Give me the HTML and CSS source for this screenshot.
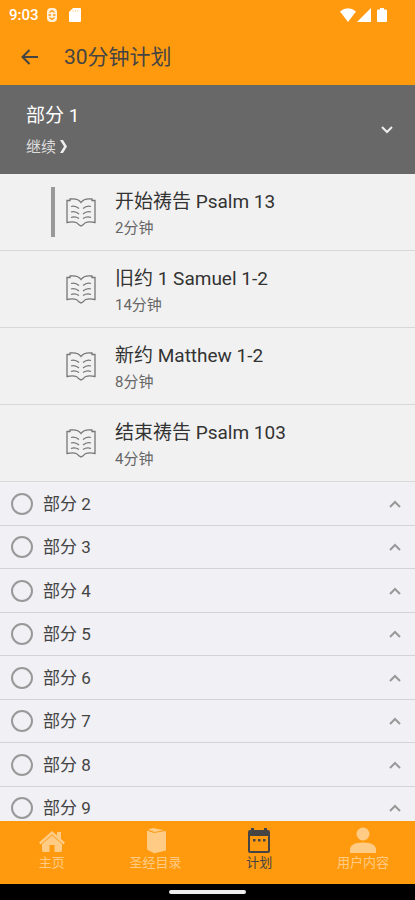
FILE: index.html
```html
<!DOCTYPE html>
<html lang="zh-CN">
<head>
    <meta charset="UTF-8">
    <meta name="viewport" content="width=device-width, initial-scale=1.0">
    <title>30分钟计划</title>
    <link rel="stylesheet" href="styles.css">
</head>
<body>
    <!-- shared icons -->
    <svg class="sprite" aria-hidden="true">
        <symbol id="book" viewBox="0 0 32 32">
            <path d="M16 6.500C14 3.500 9 2.500 5 3V4.500H2V26.500C7 25.500 12 26 13.500 28.500L16 30L18.500 28.500C20 26 25 25.500 30 26.500V4.500H27V3C23 2.500 18 3.500 16 6.500Z"/>
            <path d="M6 10.500Q10 9 14 12.500M6 16Q10 14.500 14 18M6 21.500Q10 20 14 22.500M26 10.500Q22 9 18 12.500M26 16Q22 14.500 18 18M26 21.500Q22 20 18 22.500"/>
        </symbol>
        <symbol id="up" viewBox="0 0 12 8">
            <path d="M1 7L6 2L11 7"/>
        </symbol>
    </svg>

    <div class="status">
        <span class="time">9:03</span>
        <svg width="12" height="14" viewBox="0 0 12 14">
            <rect x="1" y="0" width="10" height="14" rx="4" fill="#fff" opacity="0.85"/>
            <path d="M3.500 4.500L6 2.500L8.500 4.500M2.500 7H5M7 7H9.500M3.500 9.500L6 11.500L8.500 9.500" fill="none" stroke="#ff9a0e" stroke-width="1.300"/>
        </svg>
        <svg class="sd" width="12" height="14" viewBox="0 0 12 14">
            <path d="M4 0H11Q12 0 12 1V13Q12 14 11 14H1Q0 14 0 13V4Z" fill="#fff"/>
            <path d="M4 2V4M6.500 2V4M9 2V4" stroke="#ffd9a3"/>
        </svg>
        <span class="signals">
            <svg width="16" height="14" viewBox="0 0 16 14">
                <path d="M0 3.500Q8 -3 16 3.500L8 14Z" fill="#fff"/>
            </svg>
            <svg width="14" height="14" viewBox="0 0 14 14">
                <path d="M14 0V14H0Z" fill="#fff"/>
            </svg>
            <svg class="battery" width="10" height="14" viewBox="0 0 10 14">
                <path d="M3 0H7V1.500H9Q10 1.500 10 2.500V13Q10 14 9 14H1Q0 14 0 13V2.500Q0 1.500 1 1.500H3Z" fill="#fff"/>
            </svg>
        </span>
    </div>

    <header class="toolbar">
        <button class="back" aria-label="返回">
            <svg width="18" height="16" viewBox="0 0 18 16">
                <path d="M8.500 1L1.500 8L8.500 15M1.500 8H17"/>
            </svg>
        </button>
        <h1>30分钟计划</h1>
    </header>

    <main>
        <section class="current">
            <div>
                <h2>部分 1</h2>
                <a href="#continue" class="continue">继续
                    <svg width="7" height="13" viewBox="0 0 7 13">
                        <path d="M0 0H3L7 6.500L3 13H0L4 6.500Z" fill="#eee"/>
                    </svg>
                </a>
            </div>
            <button class="toggle" aria-label="收起">
                <svg width="12" height="8" viewBox="0 0 12 8"><path d="M1 1L6 6L11 1"/></svg>
            </button>
        </section>

        <ul class="readings">
            <li class="active">
                <svg class="book"><use href="#book"/></svg>
                <a href="#r1">开始祷告 Psalm 13<small>2分钟</small></a>
            </li>
            <li>
                <svg class="book"><use href="#book"/></svg>
                <a href="#r2">旧约 1 Samuel 1-2<small>14分钟</small></a>
            </li>
            <li>
                <svg class="book"><use href="#book"/></svg>
                <a href="#r3">新约 Matthew 1-2<small>8分钟</small></a>
            </li>
            <li>
                <svg class="book"><use href="#book"/></svg>
                <a href="#r4">结束祷告 Psalm 103<small>4分钟</small></a>
            </li>
        </ul>

        <ul class="parts">
            <li>
                <label><input type="checkbox">部分 2</label>
                <button class="toggle" aria-label="展开"><svg><use href="#up"/></svg></button>
            </li>
            <li>
                <label><input type="checkbox">部分 3</label>
                <button class="toggle" aria-label="展开"><svg><use href="#up"/></svg></button>
            </li>
            <li>
                <label><input type="checkbox">部分 4</label>
                <button class="toggle" aria-label="展开"><svg><use href="#up"/></svg></button>
            </li>
            <li>
                <label><input type="checkbox">部分 5</label>
                <button class="toggle" aria-label="展开"><svg><use href="#up"/></svg></button>
            </li>
            <li>
                <label><input type="checkbox">部分 6</label>
                <button class="toggle" aria-label="展开"><svg><use href="#up"/></svg></button>
            </li>
            <li>
                <label><input type="checkbox">部分 7</label>
                <button class="toggle" aria-label="展开"><svg><use href="#up"/></svg></button>
            </li>
            <li>
                <label><input type="checkbox">部分 8</label>
                <button class="toggle" aria-label="展开"><svg><use href="#up"/></svg></button>
            </li>
            <li>
                <label><input type="checkbox">部分 9</label>
                <button class="toggle" aria-label="展开"><svg><use href="#up"/></svg></button>
            </li>
        </ul>
    </main>

    <nav class="tabs">
        <a href="#home">
            <svg width="28" height="28" viewBox="0 0 28 28">
                <path d="M14 4L19 8.500V5H23V12L27 15.500L25.500 17.500L14 7.500L2.500 17.500L1 15.500Z"/>
                <path d="M14 8.500L24 17V23Q24 25 22.500 25H16.500V18H11.500V25H5.500Q4 25 4 23V17Z"/>
            </svg>
            主页
        </a>
        <a href="#bible">
            <svg width="28" height="28" viewBox="0 0 28 28">
                <path d="M5 3.500L12 6V26L6.500 23.500Q5 23 5 21Z"/>
                <path d="M11.500 6L24 4V23.500L11.500 26.500Z"/>
                <path d="M6 2.500L11 1L22 3.300L12.500 5Z"/>
            </svg>
            圣经目录
        </a>
        <a href="#plans" class="selected">
            <svg width="28" height="28" viewBox="0 0 28 28">
                <path fill-rule="evenodd" d="M6 1H9V3H19V1H22V3H23Q25 3 25 5V24Q25 26 23 26H5Q3 26 3 24V5Q3 3 5 3H6ZM5 9V24H23V9Z"/>
                <path d="M8 12H10.500V14.500H8ZM13 12H15.500V14.500H13ZM18 12H20.500V14.500H18Z"/>
            </svg>
            计划
        </a>
        <a href="#user">
            <svg width="28" height="28" viewBox="0 0 28 28">
                <circle cx="14" cy="7" r="6.500"/>
                <path d="M1 26V23Q1 15.500 14 15.500Q27 15.500 27 23V26Z"/>
            </svg>
            用户内容
        </a>
    </nav>
    <div class="gesture"><span></span></div>
</body>
</html>
```

FILE: styles.css
```css
* {
    box-sizing: border-box;
}
body {
    display: flex;
    flex-direction: column;
    height: 100vh;
    margin: 0;
    font-family: Roboto, "Noto Sans CJK SC", sans-serif;
    background-color: #f0f0f5;
    color: #444;
}
h1, h2, ul {
    margin: 0;
    padding: 0;
    font-weight: normal;
}
ul {
    list-style: none;
}
a {
    color: inherit;
    text-decoration: none;
}
button {
    display: flex;
    padding: 0;
    border: none;
    background: none;
    cursor: pointer;
}
svg {
    flex: none;
}
.sprite {
    position: absolute;
    width: 0;
    height: 0;
}
.status {
    display: flex;
    align-items: center;
    height: 30px;
    padding: 0 28px 0 9px;
    background-color: #ff9a0e;
    color: white;
}
.time {
    margin-right: 7px;
    font-size: 15px;
    font-weight: 500;
}
.sd {
    margin-left: 11px;
}
.signals {
    display: flex;
    gap: 1px;
    margin-left: auto;
}
.battery {
    margin-left: 5px;
}
.toolbar {
    display: flex;
    align-items: center;
    gap: 25px;
    height: 55px;
    padding: 0 21px 2px;
    background-color: #ff9a0e;
}
.toolbar h1 {
    font-size: 21px;
    line-height: 28px;
}
.back svg {
    fill: none;
    stroke: #444;
    stroke-width: 2;
}
main {
    flex: 1;
    min-height: 0;
    overflow-y: auto;
    scrollbar-width: none;
}
.current {
    display: flex;
    align-items: center;
    justify-content: space-between;
    height: 89px;
    padding: 0 22px 0 26px;
    background-color: #686868;
    color: white;
}
.current h2 {
    margin-bottom: 6px;
    font-size: 19px;
    line-height: 28px;
}
.continue {
    display: flex;
    align-items: center;
    gap: 4px;
    font-size: 15px;
    line-height: 22px;
    color: #ddd;
}
.toggle svg {
    width: 12px;
    height: 8px;
    fill: none;
    stroke: #999;
    stroke-width: 2;
}
.current .toggle svg {
    stroke: #eee;
}
.readings {
    background-color: #f1f1f1;
}
.readings li {
    display: flex;
    align-items: center;
    gap: 18px;
    height: 77px;
    padding-left: 51px;
    border-bottom: 1px solid #d8d8d8;
}
.readings li::before {
    content: "";
    width: 4px;
    height: 50px;
    margin-right: -8px;
}
.readings .active::before {
    background-color: #999;
}
.readings a {
    padding-top: 4px;
    font-size: 19px;
    line-height: 28px;
    color: #333;
}
.readings small {
    display: block;
    font-size: 15px;
    line-height: 24px;
    color: #666;
}
.book {
    width: 32px;
    height: 32px;
    fill: none;
    stroke: #777;
    stroke-width: 1.3;
}
/* rows average 43.5px */
.parts li {
    display: flex;
    align-items: center;
    justify-content: space-between;
    height: 44px;
    padding: 0 14px 0 11px;
    border-bottom: 1px solid #d4d4d8;
}
.parts li:nth-child(even) {
    height: 43px;
}
.parts label {
    display: flex;
    align-items: center;
    gap: 10px;
    font-size: 17px;
    line-height: 24px;
}
.parts input {
    appearance: none;
    width: 22px;
    height: 22px;
    margin: 0;
    border: 2px solid #999;
    border-radius: 50%;
}
.parts input:checked {
    background-color: #999;
}
.tabs {
    display: grid;
    grid-template-columns: repeat(4, 1fr);
    height: 63px;
    padding-top: 6px;
    background-color: #ff9a0e;
}
.tabs a {
    display: flex;
    flex-direction: column;
    align-items: center;
    font-size: 13px;
    line-height: 16px;
    color: #ffcb85;
}
.tabs svg {
    fill: currentColor;
}
.tabs .selected {
    color: #444;
}
.gesture {
    display: flex;
    align-items: center;
    justify-content: center;
    height: 16px;
    background-color: black;
}
.gesture span {
    width: 77px;
    height: 4px;
    border-radius: 2px;
    background-color: #eee;
}
```
